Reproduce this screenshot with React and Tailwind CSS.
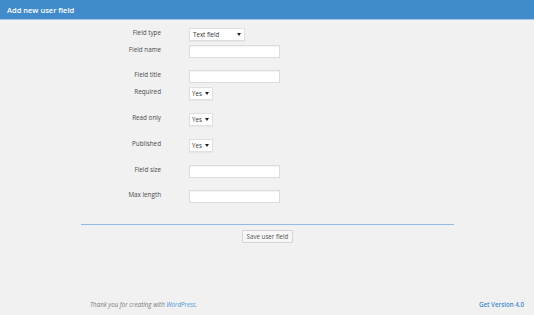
export default function App() {
  const Label = ({ children }) => (
    <div className="w-[161px] shrink-0 text-right text-[6.3px] leading-[9px] text-[#4a4a4a]">{children}</div>
  );
  const Input = () => (
    <div className="w-[91px] h-[13px] bg-white border border-[#dcdcdc] shadow-[inset_0_1px_1px_rgba(0,0,0,0.05)]" />
  );
  const Select = ({ text, w, pl }) => (
    <div className={`${w} ${pl} h-[13px] bg-white border border-[#e0e0e0] flex items-center justify-between pr-[3px] text-[6.2px] text-[#333] shadow-[0_1px_1px_rgba(0,0,0,0.04)]`}>
      <span className="leading-[9px]">{text}</span>
      <svg width="4" height="3" viewBox="0 0 4 3"><path d="M0 0H4L2 3Z" fill="#222" /></svg>
    </div>
  );
  const Row = ({ h, label, children }) => (
    <div className={`flex ${h}`}>
      <Label>{label}</Label>
      <div className="ml-[28px]">{children}</div>
    </div>
  );
  return (
    <div className="w-[534px] h-[315px] bg-[#f1f1f1] flex flex-col font-['Open_Sans',sans-serif] overflow-hidden">
      <div className="h-[20px] shrink-0 bg-[#428bca] border-b border-[#a5c8e8] flex items-center px-[7px]">
        <span className="text-white text-[7.5px] font-semibold leading-[10px]">Add new user field</span>
      </div>
      <div className="pt-[8px]">
        <Row h="h-[17px]" label="Field type"><Select text="Text field" w="w-[56px]" pl="pl-[3px]" /></Row>
        <Row h="h-[25px]" label="Field name"><Input /></Row>
        <Row h="h-[17px]" label="Field title"><Input /></Row>
        <Row h="h-[26px]" label="Required"><Select text="Yes" w="w-[24px]" pl="pl-[2px]" /></Row>
        <Row h="h-[26px]" label="Read only"><Select text="Yes" w="w-[24px]" pl="pl-[2px]" /></Row>
        <Row h="h-[26px]" label="Published"><Select text="Yes" w="w-[24px]" pl="pl-[2px]" /></Row>
        <Row h="h-[25px]" label="Field size"><Input /></Row>
        <Row h="h-[34px]" label="Max length"><Input /></Row>
      </div>
      <div className="ml-[81px] w-[373px] h-px bg-[#8dbde8]" />
      <div className="flex justify-center pl-[1px] mt-[5px]">
        <div className="h-[13px] px-[4px] border border-[#d4d4d4] bg-[#f6f6f6] rounded-[1px] flex items-center text-[6.2px] text-[#555] leading-[9px]">Save user field</div>
      </div>
      <div className="mt-auto flex justify-between pl-[90px] pr-[10px] pb-[6px] text-[6.2px] leading-[9px]">
        <span className="italic text-[#7a7a7a]">Thank you for creating with <span className="text-[#4f94d4]">WordPress</span>.</span>
        <span className="font-semibold text-[#3f8ad0]">Get Version 4.0</span>
      </div>
    </div>
  );
}
